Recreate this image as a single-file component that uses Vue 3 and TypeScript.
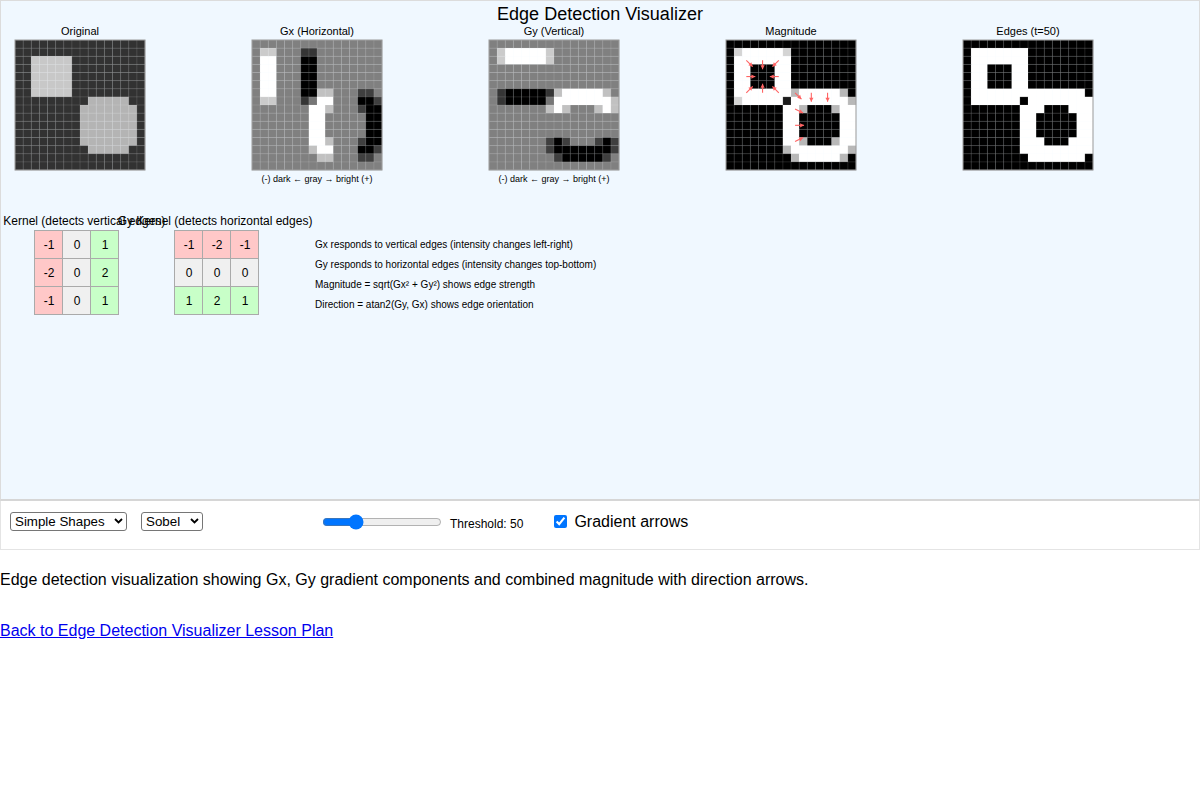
<script setup lang="ts">
const N = 16
const CELL = 130 / N

function buildOriginal(): number[][] {
  const g: number[][] = []
  for (let y = 0; y < N; y++) {
    const row: number[] = []
    for (let x = 0; x < N; x++) {
      let v = 50
      if (x >= 2 && x <= 6 && y >= 2 && y <= 6) v = 200
      const inCircle = x >= 8 && x <= 14 && y >= 7 && y <= 13 &&
        !((x === 8 || x === 14) && (y === 7 || y === 13))
      if (inCircle) v = 180
      row.push(v)
    }
    g.push(row)
  }
  return g
}

const src = buildOriginal()
const lim = (i: number) => Math.max(0, Math.min(N - 1, i))
const at = (x: number, y: number) => src[lim(y)][lim(x)]

function gxAt(x: number, y: number) {
  return at(x + 1, y - 1) - at(x - 1, y - 1) + 2 * (at(x + 1, y) - at(x - 1, y)) + at(x + 1, y + 1) - at(x - 1, y + 1)
}
function gyAt(x: number, y: number) {
  return at(x - 1, y + 1) - at(x - 1, y - 1) + 2 * (at(x, y + 1) - at(x, y - 1)) + at(x + 1, y + 1) - at(x + 1, y - 1)
}
const clamp = (v: number) => Math.max(0, Math.min(255, Math.round(v)))
const mapGrid = (f: (x: number, y: number) => number) =>
  src.map((row, y) => row.map((_, x) => clamp(f(x, y))))

const gx = mapGrid((x, y) => 128 + gxAt(x, y) / 2)
const gy = mapGrid((x, y) => 128 + gyAt(x, y) / 2)
const mag = mapGrid((x, y) => Math.hypot(gxAt(x, y), gyAt(x, y)))
const edges = mapGrid((x, y) => (Math.hypot(gxAt(x, y), gyAt(x, y)) > 50 ? 255 : 0))

interface Arrow { x1: number; y1: number; x2: number; y2: number; h: string }
const arrowCells: [number, number][] = [
  [2, 2], [4, 2], [6, 2], [2, 4], [6, 4], [2, 6], [4, 6], [6, 6],
  [8, 6], [10, 6], [12, 6], [8, 8], [8, 10], [8, 12],
]
const arrows: Arrow[] = arrowCells.map(([x, y]) => {
  const a = Math.atan2(gyAt(x, y), gxAt(x, y))
  const x1 = (x + 0.5) * CELL
  const y1 = (y + 0.5) * CELL
  const x2 = x1 + Math.cos(a) * 9
  const y2 = y1 + Math.sin(a) * 9
  const p = (d: number) => `${x2 + Math.cos(a + d) * 4.5},${y2 + Math.sin(a + d) * 4.5}`
  return { x1, y1, x2, y2, h: `${x2},${y2} ${p(2.65)} ${p(-2.65)}` }
})

const panels = [
  { title: 'Original', grid: src, legend: false, arrows: false },
  { title: 'Gx (Horizontal)', grid: gx, legend: true, arrows: false },
  { title: 'Gy (Vertical)', grid: gy, legend: true, arrows: false },
  { title: 'Magnitude', grid: mag, legend: false, arrows: true },
  { title: 'Edges (t=50)', grid: edges, legend: false, arrows: false },
]

const kernels = [
  { title: 'Gx Kernel (detects vertical edges)', values: [-1, 0, 1, -2, 0, 2, -1, 0, 1] },
  { title: 'Gy Kernel (detects horizontal edges)', values: [-1, -2, -1, 0, 0, 0, 1, 2, 1] },
]
const kernelClass = (v: number) => (v < 0 ? 'neg' : v > 0 ? 'pos' : 'zero')

const notes = [
  'Gx responds to vertical edges (intensity changes left-right)',
  'Gy responds to horizontal edges (intensity changes top-bottom)',
  'Magnitude = sqrt(Gx² + Gy²) shows edge strength',
  'Direction = atan2(Gy, Gx) shows edge orientation',
]
const ticks = Array.from({ length: N + 1 }, (_, i) => i * CELL)
const shade = (v: number) => `rgb(${v},${v},${v})`
</script>

<template>
  <div class="page">
    <section class="stage">
      <h1 class="title">Edge Detection Visualizer</h1>
      <div class="panels">
        <div v-for="p in panels" :key="p.title" class="panel">
          <div class="panel-title">{{ p.title }}</div>
          <svg class="grid" width="132" height="132" viewBox="-1 -1 132 132">
            <template v-for="(row, y) in p.grid" :key="y">
              <rect
                v-for="(v, x) in row"
                :key="x"
                :x="x * CELL"
                :y="y * CELL"
                :width="CELL + 0.1"
                :height="CELL + 0.1"
                :fill="shade(v)"
              />
            </template>
            <g class="lines">
              <line v-for="t in ticks" :key="'v' + t" :x1="t" :x2="t" y1="0" y2="130" />
              <line v-for="t in ticks" :key="'h' + t" :y1="t" :y2="t" x1="0" x2="130" />
            </g>
            <rect class="frame" x="0" y="0" width="130" height="130" />
            <g v-if="p.arrows" class="arrows">
              <g v-for="(a, i) in arrows" :key="i">
                <line :x1="a.x1" :y1="a.y1" :x2="a.x2" :y2="a.y2" />
                <polygon :points="a.h" />
              </g>
            </g>
          </svg>
          <div v-if="p.legend" class="legend">(-) dark ← gray → bright (+)</div>
        </div>
      </div>
      <div class="lower">
        <div v-for="k in kernels" :key="k.title" class="kernel">
          <div class="kernel-title">{{ k.title }}</div>
          <div class="matrix">
            <div v-for="(v, i) in k.values" :key="i" class="cell" :class="kernelClass(v)">{{ v }}</div>
          </div>
        </div>
        <div class="notes">
          <div v-for="n in notes" :key="n" class="note">{{ n }}</div>
        </div>
      </div>
    </section>

    <section class="controls">
      <span class="select-wrap first">
        <select class="select sel-image">
          <option>Simple Shapes</option>
        </select>
        <svg class="chev" width="9" height="6" viewBox="0 0 9 6"><path d="M1 1 4.5 4.5 8 1" /></svg>
      </span>
      <span class="select-wrap">
        <select class="select sel-op">
          <option>Sobel</option>
        </select>
        <svg class="chev" width="9" height="6" viewBox="0 0 9 6"><path d="M1 1 4.5 4.5 8 1" /></svg>
      </span>
      <input class="slider" type="range" min="0" max="200" value="50" />
      <span class="threshold">Threshold: 50</span>
      <label class="check">
        <input type="checkbox" checked />
        <span>Gradient arrows</span>
      </label>
    </section>

    <p class="desc">Edge detection visualization showing Gx, Gy gradient components and combined magnitude with direction arrows.</p>
    <a class="back" href="#">Back to Edge Detection Visualizer Lesson Plan</a>
  </div>
</template>

<style>
html, body { margin: 0; background: #fff; }
</style>

<style scoped>
.page {
  width: 1200px;
  font-family: "Liberation Sans", Arial, sans-serif;
  color: #000;
  overflow: hidden;
}
.stage {
  box-sizing: border-box;
  position: relative;
  height: 501px;
  background: #f0f8ff;
  border: 1px solid #dcdcdc;
  border-bottom: 2px solid #d6d6d6;
  overflow: hidden;
}
.title {
  margin: 3px 0 0;
  text-align: center;
  font-size: 18px;
  line-height: 20px;
  font-weight: 400;
}
.panels {
  display: flex;
  gap: 105px;
  padding-left: 13px;
}
.panel {
  width: 132px;
  display: flex;
  flex-direction: column;
  align-items: center;
}
.panel-title {
  font-size: 11px;
  line-height: 13px;
  margin-top: 1px;
  margin-bottom: 1px;
  white-space: nowrap;
}
.grid { display: block; }
.lines line {
  stroke: rgba(255, 255, 255, 0.2);
  stroke-width: 0.6;
}
.frame {
  fill: none;
  stroke: #999;
  stroke-width: 1;
}
.arrows line {
  stroke: #ff6464;
  stroke-width: 1.1;
}
.arrows polygon { fill: #ff6464; }
.legend {
  font-size: 9px;
  line-height: 11px;
  margin-top: 3px;
  white-space: nowrap;
}
.lower {
  position: absolute;
  top: 213px;
  left: -1px;
  display: flex;
}
.kernel {
  width: 85px;
  margin-left: 34px;
  display: flex;
  flex-direction: column;
}
.kernel + .kernel { margin-left: 55px; }
.kernel-title {
  font-size: 12px;
  line-height: 14px;
  margin-bottom: 2px;
  white-space: nowrap;
  display: flex;
  justify-content: center;
  width: 82px;
}
.matrix {
  display: grid;
  grid-template-columns: repeat(3, 28px);
  grid-auto-rows: 28px;
  border: 1px solid #aaa;
  border-width: 1px 0 0 1px;
  background: #aaa;
  box-sizing: border-box;
  width: 85px;
  height: 85px;
}
.cell {
  display: flex;
  align-items: center;
  justify-content: center;
  font-size: 12px;
  box-shadow: inset -1px -1px 0 #aaa;
}
.neg { background: #ffc8c8; }
.pos { background: #c8ffc8; }
.zero { background: #f0f0f0; }
.notes {
  margin-left: 56px;
  padding-top: 25px;
  display: flex;
  flex-direction: column;
  gap: 8px;
}
.note {
  font-size: 10px;
  line-height: 12px;
  white-space: nowrap;
}
.controls {
  box-sizing: border-box;
  height: 49px;
  border: 1px solid #e4e4e4;
  border-top: 0;
  display: flex;
  align-items: center;
  background: #fff;
  padding: 0 0 7px 9px;
}
.select-wrap {
  position: relative;
  display: inline-flex;
  margin-left: 14px;
}
.select-wrap.first { margin-left: 0; }
.select {
  appearance: none;
  -webkit-appearance: none;
  box-sizing: border-box;
  height: 19px;
  background: #fff;
  border: 1px solid #767676;
  border-radius: 3px;
  font-family: inherit;
  font-size: 13.33px;
  line-height: 17px;
  padding: 0 0 0 4px;
  color: #000;
}
.sel-image { width: 117px; }
.sel-op { width: 62px; }
.chev {
  position: absolute;
  right: 4px;
  top: 6px;
  pointer-events: none;
}
.chev path {
  fill: none;
  stroke: #000;
  stroke-width: 1.8;
}
.slider {
  width: 120px;
  margin: 0 0 0 119px;
}
.threshold {
  font-size: 12px;
  margin-left: 8px;
  position: relative;
  top: 2px;
}
.check {
  display: flex;
  align-items: center;
  font-size: 16px;
  margin-left: 31px;
}
.check input {
  margin: 0 7px 0 0;
  width: 13px;
  height: 13px;
}
.desc {
  margin: 21px 0 0;
  font-size: 16px;
  line-height: 18px;
}
.back {
  display: block;
  width: max-content;
  margin-top: 33px;
  font-size: 16px;
  line-height: 18px;
  color: #0000ee;
}
</style>
